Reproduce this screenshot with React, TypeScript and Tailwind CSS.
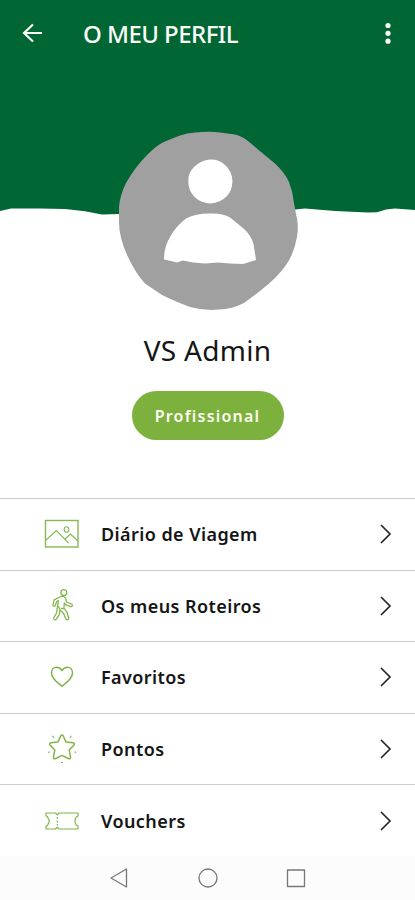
import type { ReactNode } from "react";

const PhotoIcon = () => (
  <svg width="36" height="30" viewBox="0 0 36 30" fill="none" stroke="#86b953" strokeWidth="1.1">
    <rect x="1.5" y="1.5" width="32.5" height="26.5" strokeWidth="1.4" />
    <path d="M2 21 12.500 11.500 24.500 24M20.500 20.500l6-5.500 7.500 7" />
    <ellipse cx="22.500" cy="10.500" rx="2.3" ry="2.8" />
  </svg>
);

const WalkIcon = () => (
  <svg width="36" height="36" viewBox="0 0 36 36" fill="none" stroke="#7fb548" strokeWidth="1.25" strokeLinejoin="round" strokeLinecap="round">
    <ellipse cx="19.800" cy="4.600" rx="2.900" ry="3.100" />
    <path d="M16.200 8.800c2.200-1.200 4.800-.3 5.500 2l.8 3.200 5 2c1.600.9.900 2.900-1 2.600l-5-1.900-1.200-1.700-.4 5.200 2.900 3.600 1.900 6.200c.3 1.900-2.100 2.600-3 .8l-1.900-5.100-3.600-3.600-1 4.600-2.800 4.400c-1.200 1.500-3.300.2-2.500-1.600l2.600-4.400.9-6.300 1-6.400-2 1.500-.9 3.300c-.7 1.600-2.800 1.100-2.500-.7l1.200-4.600z" />
    <path d="m14.400 18.400 1.800 3.700M17.400 20.300l2.300.4" />
  </svg>
);

const HeartIcon = () => (
  <svg width="36" height="30" viewBox="0 0 36 30" fill="none" stroke="#7fb548" strokeWidth="1.5" strokeLinejoin="round">
    <path d="M18 24.300C14.300 21.200 7.500 17.100 7.500 11c0-3.400 2.200-5.800 5-5.800 2.600 0 4.400 1.600 5.500 3.400 1.100-1.800 3-3.400 5.500-3.400 2.800 0 5 2.400 5 5.800 0 6.100-6.800 10.200-10.500 13.300z" />
  </svg>
);

const StarIcon = () => (
  <svg width="36" height="36" viewBox="0 0 36 36" fill="none" stroke="#7fb548" strokeWidth="1.5" strokeLinejoin="round" strokeLinecap="round">
    <path d="M16.900 4.700c.5-1 1.700-1 2.200 0l2.900 6.200 6.900.9c1.600.2 2 1.400.9 2.500l-4.600 4.800 1.300 6.800c.3 1.600-.8 2.300-2.200 1.600L18 24.400 11.700 27.500c-1.400.7-2.500 0-2.200-1.600l1.300-6.800-4.600-4.800c-1.100-1.100-.7-2.300.9-2.500l6.900-.9z" />
    <path strokeWidth="1.200" d="m8.800 5.200.9 1.200M26.900 5.200l-.7 1.200M4.400 21.300l1-.3M30.900 21l.9.300M17.600 31.300h.8" />
  </svg>
);

const TicketIcon = () => (
  <svg width="36" height="20" viewBox="0 0 36 20" fill="none" stroke="#7fb548" strokeWidth="1.2" strokeLinejoin="round">
    <path d="M2 2h9.500l1.800 1.800L15.100 2H34v3c-4 1.500-4 8.500 0 10v3H15.100l-1.800-1.800L11.500 18H2v-3c1.200 0 2-.7 2-1.800L5.500 10 3.800 6.700C3.800 5.500 3.200 5 2 5z" />
    <path d="M13.300 6v8.500" strokeDasharray="2 1.500" />
  </svg>
);

const items: { label: string; icon: ReactNode }[] = [
  { label: "Diário de Viagem", icon: <PhotoIcon /> },
  { label: "Os meus Roteiros", icon: <WalkIcon /> },
  { label: "Favoritos", icon: <HeartIcon /> },
  { label: "Pontos", icon: <StarIcon /> },
  { label: "Vouchers", icon: <TicketIcon /> },
];

export default function App() {
  return (
    <div className="flex h-[900px] w-[415px] flex-col overflow-hidden bg-white font-['Noto_Sans',sans-serif] text-[#151515]">
      <header className="flex h-[68px] shrink-0 items-center bg-[#006633] text-[#fbfff8]">
        <svg className="ml-[21px] -mt-[3px]" width="22" height="20" viewBox="0 0 22 20" fill="none" stroke="currentColor" strokeWidth="2.200">
          <path d="M21 10H3M12 1.500 3 10l9 8.500" />
        </svg>
        <h1 className="ml-[40px] grow text-[24px] font-medium leading-8 tracking-[-0.55px]">O MEU PERFIL</h1>
        <svg className="mr-[22px]" width="10" height="24" viewBox="0 0 10 24" fill="currentColor">
          <circle cx="5" cy="3.500" r="2.600" />
          <circle cx="5" cy="11.300" r="2.600" />
          <circle cx="5" cy="19.200" r="2.600" />
        </svg>
      </header>

      <svg className="shrink-0" width="415" height="252" viewBox="0 68 415 252">
        <path fill="#006633" d="M0 68H415V210L395 208.500 386 209.500 377 212.200 368 212.600 335 211 305 208.500 295 209.500V214H119L102 214.500 85 211.200 65 209 40 208.500 11 208.500 0 211Z" />
        <path fill="#a0a0a0" d="M195 132.500Q210 131 220 132.500L235 134.500Q242 136 248 141L258 149.500 275 163.500Q285 173 289 182 293 192 294 203L296 214Q299 224 297 237 294 254 286 265 278 277 260 291L244 303Q232 309 219 309.500 205 311 190 307 174 301 162 295L145 283.500Q136 274 128 257 119 238 119 222V207Q120 195 126 183 135 167 148 154 158 144 166 141L180 135.500Q187 133 195 132.500Z" />
        <path fill="#fff" d="M210 159.500Q219 159 225 165 232 171 232.500 181 232 191 227 196 220 203 211 203.500 201 203 194.500 197 188 190 188.300 181 188 173 194 167 201 160 210 159.500Z" />
        <path fill="#fff" d="M164 259.500Q164 247 170 237 176 226 186 218.500 196 213.500 209 213.500 223 213 230 217.500L243 228Q251 235 253.500 244L256 260 243 264 230 263.500 218 262.500 205 263.500 193 262.500 183 260.500 177 262.500 171 261Z" />
      </svg>

      <section className="flex h-[178px] shrink-0 flex-col items-center">
        <h2 className="mt-[10px] text-[28px] leading-10 tracking-[0.3px]">VS Admin</h2>
        <button className="mt-[21px] h-[49px] w-[152px] rounded-full bg-[#7db13e] text-base font-semibold tracking-[1.2px] text-[#fbfdf2]">Profissional</button>
      </section>

      <nav className="flex h-[358px] shrink-0 flex-col">
        {items.map((item) => (
          <a key={item.label} className="flex min-h-0 flex-1 items-center border-t-[1.500px] border-[#cbcbcb]">
            <span className="ml-[44px] flex w-[36px] justify-center">{item.icon}</span>
            <span className="ml-[21px] grow text-lg font-semibold tracking-[0.42px]">{item.label}</span>
            <svg className="mr-[21px]" width="16" height="22" viewBox="0 0 16 22" fill="none" stroke="#222" strokeWidth="1.600">
              <path d="m3 2 9 9-9 9" />
            </svg>
          </a>
        ))}
      </nav>

      <footer className="flex h-[44px] shrink-0 items-center justify-center gap-[68px] bg-[#fcfcfc]">
        {["M17.500 2v18L2 11Z", "M20 11A9 9 0 1 1 2 11A9 9 0 1 1 20 11Z", "M2.500 3h17v16.500h-17Z"].map((d) => (
          <svg key={d} width="20" height="22" viewBox="1 0 20 22" fill="none" stroke="#777" strokeWidth="1.300" strokeLinejoin="round">
            <path d={d} />
          </svg>
        ))}
      </footer>
    </div>
  );
}
